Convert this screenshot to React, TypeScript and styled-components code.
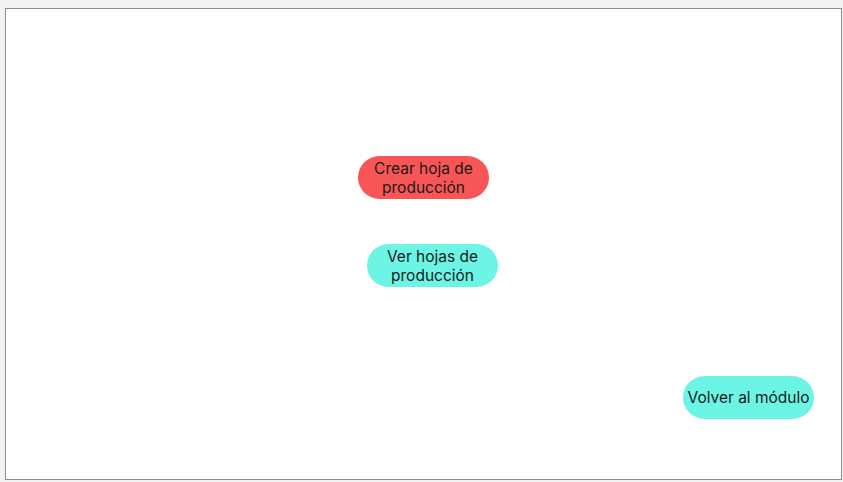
import styled, { createGlobalStyle } from "styled-components";

const GlobalStyle = createGlobalStyle`
  html, body {
    margin: 0;
    padding: 0;
    background: #f3f3f3;
  }
  body {
    font-family: Inter, "Noto Sans", sans-serif;
  }
`;

export default function App() {
  return (
    <>
      <GlobalStyle />
      <Page>
        <Frame>
          <PillButton $tone="red" $shift={0} style={{ marginTop: 147 }}>
            Crear hoja de producción
          </PillButton>
          <PillButton $tone="cyan" $shift={18} style={{ marginTop: 45 }}>
            Ver hojas de producción
          </PillButton>
          <BackRow>
            <PillButton $tone="cyan" $shift={0}>
              Volver al módulo
            </PillButton>
          </BackRow>
        </Frame>
      </Page>
    </>
  );
}

const Page = styled.div`
  padding: 8px 1px 2px 5px;
  height: 482px;
  box-sizing: border-box;
`;

const Frame = styled.div`
  height: 100%;
  box-sizing: border-box;
  background: #ffffff;
  border: 1px solid #8c8c8c;
  display: flex;
  flex-direction: column;
  align-items: center;
`;

const PillButton = styled.button<{ $tone: "red" | "cyan"; $shift: number }>`
  width: 131px;
  height: 43px;
  padding: 0 3px;
  margin-left: ${(p) => p.$shift}px;
  border: none;
  border-radius: 22px;
  background: ${(p) => (p.$tone === "red" ? "#f85656" : "#6cf4e4")};
  color: #1a1a1a;
  font-family: Inter, "Noto Sans", sans-serif;
  font-size: 15.5px;
  line-height: 19px;
  text-align: center;
  cursor: pointer;
`;

const BackRow = styled.div`
  align-self: stretch;
  display: flex;
  justify-content: flex-end;
  padding-right: 27px;
  margin-top: 89px;
`;
